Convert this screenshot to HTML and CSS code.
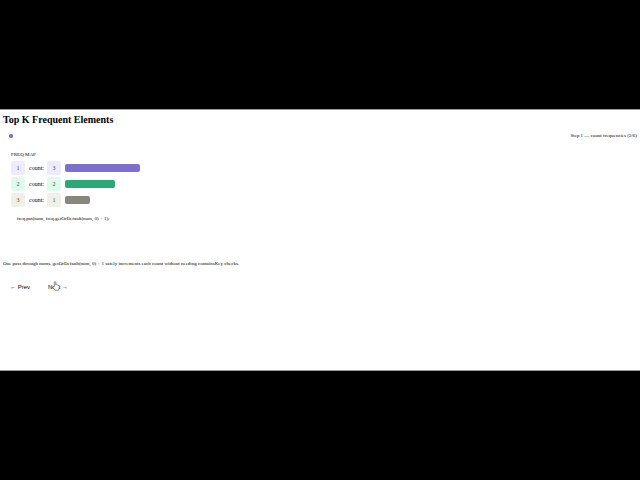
FILE: index.html
```
<!DOCTYPE html>
<html lang="en">
<head>
<meta charset="utf-8">
<title>Top K Frequent Elements</title>
<link rel="stylesheet" href="styles.css">
</head>
<body>
<main class="stage">
  <h1 class="title">Top K Frequent Elements</h1>
  <div class="progress">
    <span class="dot"></span>
    <span class="step">Step 1 — count frequencies (2/6)</span>
  </div>
  <section class="panel">
    <h2 class="label">FREQ MAP</h2>
    <div class="row one"><span class="cell">1</span><span class="word">count:</span><span class="cell">3</span><span class="track"><span class="bar"></span></span></div>
    <div class="row two"><span class="cell">2</span><span class="word">count:</span><span class="cell">2</span><span class="track"><span class="bar"></span></span></div>
    <div class="row three"><span class="cell">3</span><span class="word">count:</span><span class="cell">1</span><span class="track"><span class="bar"></span></span></div>
    <div class="code">freq.put(num, freq.getOrDefault(num, 0) + 1);</div>
  </section>
  <p class="note">One pass through nums. getOrDefault(num, 0) + 1 safely increments each count without needing containsKey checks.</p>
  <div class="nav">
    <button class="btn" type="button">← Prev</button>
    <button class="btn next" type="button">Next →<svg class="pointer" viewBox="0 0 14 18" aria-hidden="true"><path d="M4 10V2.5a1.300 1.300 0 0 1 2.600 0V7l1-.5 1.300 1 1-.4 1.200 1 .9-.2 1 1.200V12l-1.500 4.500H5.500L1.300 11.500 1.800 9.500Z"/></svg></button>
  </div>
</main>
</body>
</html>
```
FILE: styles.css
```
* { box-sizing: border-box; }
body {
  margin: 0;
  min-height: 100vh;
  display: grid;
  align-items: center;
  background: #000;
  color: #000;
  font: 5px/6px "Liberation Serif", "Times New Roman", serif;
}
.stage {
  min-height: 262px;
  padding: 4px 3px;
  background: #fff;
  border-top: 1px solid #999;
  border-bottom: 1px solid #999;
}
.title { margin: 0; font-size: 10px; line-height: 12px; }
.progress {
  display: flex;
  justify-content: space-between;
  align-items: center;
  margin-top: 7px;
  padding-left: 6px;
}
.dot { width: 4px; height: 4px; border-radius: 50%; background: #7469bb; }
.panel { margin-top: 13px; padding-left: 8px; }
.label { margin: 0 0 3px; font-size: 5px; font-weight: 400; line-height: 6px; }
.row { display: flex; align-items: center; gap: 4px; margin-bottom: 2px; }
.cell {
  width: 14px;
  height: 14px;
  border-radius: 2px;
  font-size: 6px;
  line-height: 14px;
  text-align: center;
}
.word { width: 14px; font-size: 6px; }
.track { flex: 1; }
.bar { display: block; height: 8px; border-radius: 2px; }
.one .cell { background: #ececfd; color: #3f3980; }
.two .cell { background: #dffbec; color: #196344; }
.three .cell { background: #f0f0e6; color: #494940; }
.one .bar { width: 75px; background: #7d6fcd; }
.two .bar { width: 50px; background: #2aaa76; }
.three .bar { width: 25px; background: #87877e; }
.code { margin-top: 9px; padding-left: 6px; }
.note { margin: 39px 0 16px; }
.nav { display: flex; gap: 12px; padding-left: 4px; }
.btn {
  position: relative;
  padding: 0 3px;
  border: 0;
  background: none;
  color: #000;
  font: 6px/8px "Liberation Sans", Arial, sans-serif;
}
.pointer {
  position: absolute;
  left: 7px;
  top: -2px;
  width: 8px;
  height: 10px;
  fill: #fff;
  stroke: #333;
}
```
